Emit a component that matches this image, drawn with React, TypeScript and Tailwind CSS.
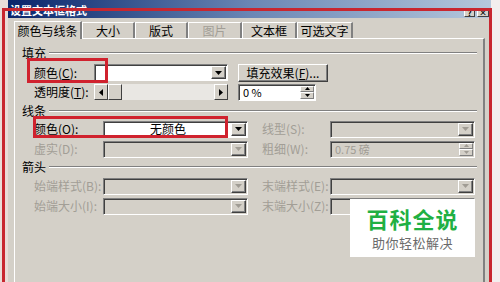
import React from "react";

const tabs = ["颜色与线条", "大小", "版式", "图片", "文本框", "可选文字"];
const tabWidths = ["w-[68px]", "w-[53px]", "w-[53px]", "w-[54px]", "w-[55px]", "w-[56px]"];

function Accel({ text, k }: { text: string; k: string }) {
  // label like 颜色(C): with underlined accelerator key
  return (
    <span>
      {text}(<span className="underline">{k}</span>):
    </span>
  );
}

function DownArrow({ disabled }: { disabled?: boolean }) {
  return (
    <div className="w-[15px] h-full flex items-center justify-center bg-[#d4d0c8] border border-t-white border-l-white border-b-[#404040] border-r-[#404040] shadow-[inset_-1px_-1px_0_#808080]">
      <svg width="7" height="4" viewBox="0 0 7 4">
        <path d="M0 0h7L3.5 4z" fill={disabled ? "#a09c94" : "#000"} />
      </svg>
    </div>
  );
}

function Combo({ w, disabled, children }: { w: string; disabled?: boolean; children?: React.ReactNode }) {
  return (
    <div
      className={`${w} h-[17px] flex border border-t-[#808080] border-l-[#808080] border-b-white border-r-white shadow-[inset_1px_1px_0_#404040] p-[1px] ${
        disabled ? "bg-[#d4d0c8]" : "bg-white"
      }`}
    >
      <div className="flex-1 flex items-center justify-center text-[12px] leading-none">{children}</div>
      <DownArrow disabled={disabled} />
    </div>
  );
}

function Spin({ w, disabled, value }: { w: string; disabled?: boolean; value: string }) {
  return (
    <div
      className={`${w} h-[17px] flex border border-t-[#808080] border-l-[#808080] border-b-white border-r-white shadow-[inset_1px_1px_0_#404040] p-[1px] ${
        disabled ? "bg-[#d4d0c8]" : "bg-white"
      }`}
    >
      <div className={`flex-1 flex items-center pl-[3px] text-[11px] leading-none ${disabled ? "text-[#a09c94]" : "text-black"}`}>
        {value}
      </div>
      <div className="w-[14px] flex flex-col">
        <div className="flex-1 flex items-center justify-center bg-[#d4d0c8] border border-t-white border-l-white border-b-[#808080] border-r-[#808080]">
          <svg width="5" height="3" viewBox="0 0 5 3">
            <path d="M0 3h5L2.5 0z" fill={disabled ? "#a09c94" : "#000"} />
          </svg>
        </div>
        <div className="flex-1 flex items-center justify-center bg-[#d4d0c8] border border-t-white border-l-white border-b-[#808080] border-r-[#808080]">
          <svg width="5" height="3" viewBox="0 0 5 3">
            <path d="M0 0h5L2.5 3z" fill={disabled ? "#a09c94" : "#000"} />
          </svg>
        </div>
      </div>
    </div>
  );
}

function Header({ text }: { text: string }) {
  return (
    <div className="flex items-center h-[14px] pl-[7px] pr-[6px]">
      <span className="text-[12px] leading-none mr-[3px]">{text}</span>
      <div className="flex-1 border-t border-t-[#808080] border-b border-b-white" />
    </div>
  );
}

export default function App() {
  const dis = "text-[#a29e96] whitespace-nowrap";
  return (
    <div className="w-[500px] h-[282px] overflow-hidden relative flex bg-[#f3eeee] font-['Noto_Sans_CJK_SC','Noto_Sans',sans-serif] text-black">
      <div className="w-[8px] bg-[#eadcd8]" />
      <div className="w-[483px] flex flex-col bg-[#d4d0c8]">
        {/* title bar */}
        <div className="h-[18px] flex items-end bg-gradient-to-r from-[#0a246a] via-[#6a86b4] to-[#b6c8dc] pl-[2px] pr-[2px] pb-[1px]">
          <span className="text-white font-bold text-[11px] leading-none translate-y-[-1px]">设置文本框格式</span>
          <div className="ml-auto flex gap-[2px]">
            <div className="w-[11px] h-[9px] bg-[#d4d0c8] border border-t-white border-l-white border-b-[#404040] border-r-[#404040] text-[8px] font-bold leading-none flex items-center justify-center">
              ?
            </div>
            <div className="w-[12px] h-[9px] bg-[#d4d0c8] border border-t-white border-l-white border-b-[#404040] border-r-[#404040] text-[8px] font-bold leading-none flex items-center justify-center">
              ×
            </div>
          </div>
        </div>

        <div className="flex-1 flex flex-col px-[6px] pt-[2px]">
          {/* tabs */}
          <div className="flex items-end h-[18px]">
            {tabs.map((t, i) => (
              <div
                key={t}
                className={`${tabWidths[i]} flex items-center justify-center text-[12px] leading-none border-t border-t-white border-l border-l-white border-r-2 border-r-[#808080] ${
                  i === 0 ? "h-[18px] bg-[#d4d0c8] relative z-10 mb-[-1px]" : "h-[16px]"
                } ${i === 3 ? "text-[#a29e96]" : ""}`}
              >
                {t}
              </div>
            ))}
          </div>

          {/* panel */}
          <div className="flex-1 flex flex-col border-t border-t-white border-l border-l-white border-r-2 border-r-[#808080]">
            <div className="h-[7px]" />
            <Header text="填充" />
            <div className="flex items-center h-[17px] mt-[4px] text-[12px]">
              <div className="w-[79px] pl-[19px] whitespace-nowrap">
                <Accel text="颜色" k="C" />
              </div>
              <Combo w="w-[134px]" />
              <div className="ml-[10px] w-[90px] h-[18px] flex items-center justify-center bg-[#d4d0c8] border border-t-white border-l-white border-b-[#404040] border-r-[#404040] shadow-[inset_-1px_-1px_0_#808080] text-[12px] leading-none">
                填充效果(<span className="underline">F</span>)...
              </div>
            </div>
            <div className="flex items-center h-[16px] mt-[3px] text-[12px]">
              <div className="w-[79px] pl-[19px] whitespace-nowrap">
                <Accel text="透明度" k="T" />
              </div>
              <div className="w-[134px] h-[16px] flex bg-[#e9e7e3]">
                <div className="w-[14px] flex items-center justify-center bg-[#d4d0c8] border border-t-white border-l-white border-b-[#404040] border-r-[#404040]">
                  <svg width="4" height="7" viewBox="0 0 4 7">
                    <path d="M4 0v7L0 3.5z" fill="#000" />
                  </svg>
                </div>
                <div className="w-[14px] bg-[#d4d0c8] border border-t-white border-l-white border-b-[#404040] border-r-[#404040]" />
                <div className="flex-1" />
                <div className="w-[14px] flex items-center justify-center bg-[#d4d0c8] border border-t-white border-l-white border-b-[#404040] border-r-[#404040]">
                  <svg width="4" height="7" viewBox="0 0 4 7">
                    <path d="M0 0v7L4 3.5z" fill="#000" />
                  </svg>
                </div>
              </div>
              <div className="ml-[10px]">
                <Spin w="w-[78px]" value="0 %" />
              </div>
            </div>

            <div className="h-[4px]" />
            <Header text="线条" />
            <div className="flex items-center h-[16px] mt-[3px] text-[12px]">
              <div className="w-[88px] pl-[19px] whitespace-nowrap">
                <Accel text="颜色" k="O" />
              </div>
              <Combo w="w-[145px]">无颜色</Combo>
              <div className={`w-[82px] pl-[14px] ${dis}`}>线型(S):</div>
              <Combo w="w-[145px]" disabled />
            </div>
            <div className="flex items-center h-[16px] mt-[4px] text-[12px]">
              <div className={`w-[88px] pl-[19px] ${dis}`}>虚实(D):</div>
              <Combo w="w-[145px]" disabled />
              <div className={`w-[82px] pl-[14px] ${dis}`}>粗细(W):</div>
              <Spin w="w-[145px]" value="0.75 磅" disabled />
            </div>

            <div className="h-[3px]" />
            <Header text="箭头" />
            <div className="flex items-center h-[16px] mt-[4px] text-[12px]">
              <div className={`w-[88px] pl-[19px] ${dis}`}>始端样式(B):</div>
              <Combo w="w-[145px]" disabled />
              <div className={`w-[82px] pl-[14px] ${dis}`}>末端样式(E):</div>
              <Combo w="w-[145px]" disabled />
            </div>
            <div className="flex items-center h-[16px] mt-[4px] text-[12px]">
              <div className={`w-[88px] pl-[19px] ${dis}`}>始端大小(I):</div>
              <Combo w="w-[145px]" disabled />
              <div className={`w-[82px] pl-[14px] ${dis}`}>末端大小(Z):</div>
              <Combo w="w-[145px]" disabled />
            </div>
          </div>
        </div>
      </div>
      <div className="flex-1 bg-[#f3eeee]" />

      {/* red annotations */}
      <div className="absolute left-[2px] top-[8px] w-[490px] h-[290px] border-[3px] border-[#c8262f]" />
      <div className="absolute left-[27px] top-[58px] w-[81px] h-[25px] border-[3px] border-[#d0222e]" />
      <div className="absolute left-[33px] top-[116px] w-[195px] h-[22px] border-[3px] border-[#d0222e]" />

      {/* watermark */}
      <div className="absolute left-[350px] top-[199px] w-[125px] h-[58px] bg-white flex flex-col items-center pt-[8px]">
        <div className="text-[22px] font-bold leading-none text-[#1fb043] tracking-[1px]">百科全说</div>
        <div className="text-[13px] leading-none text-[#6b6b6b] mt-[7px] tracking-[0.5px]">助你轻松解决</div>
      </div>
    </div>
  );
}
